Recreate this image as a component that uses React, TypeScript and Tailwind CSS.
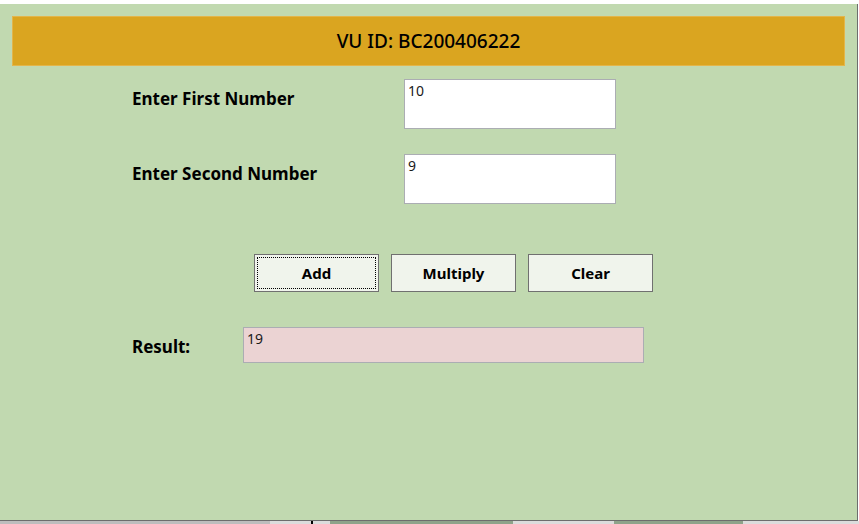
const font = { fontFamily: '"Noto Sans", "Open Sans", sans-serif' };

function Field({ label, value }: { label: string; value: string }) {
  return (
    <div className="flex items-start">
      <div className="w-[404px] pl-[132px] pt-[10px] text-[17px] leading-[20px] font-bold text-black whitespace-nowrap">
        {label}
      </div>
      <div className="w-[212px] h-[50px] bg-white border border-[#abadb3] px-[3px] pt-[2px] text-[14px] leading-[18px] text-[#1a1a1a]">
        {value}
      </div>
    </div>
  );
}

function Btn({ label, focused }: { label: string; focused?: boolean }) {
  return (
    <button className="w-[125px] h-[38px] bg-[#f0f4ec] border border-[#707070] p-[2px] text-[15px] font-bold text-black">
      <div
        className={
          "w-full h-full flex items-center justify-center " +
          (focused ? "border border-dotted border-black" : "border border-transparent")
        }
      >
        {label}
      </div>
    </button>
  );
}

export default function App() {
  return (
    <div className="w-[859px] h-[524px] bg-white overflow-hidden" style={font}>
      <div className="h-[4px]" />
      <div className="w-[858px] h-[517px] bg-[#c1d9b0] border-r border-b border-[#6d6d6d] flex flex-col">
        <div className="mt-[12px] ml-[12px] w-[833px] h-[50px] bg-[#daa520] border border-[#e3b54a] flex items-center justify-center text-[19px] font-medium text-black">
          VU ID: BC200406222
        </div>

        <div className="mt-[13px]">
          <Field label="Enter First Number" value="10" />
        </div>
        <div className="mt-[25px]">
          <Field label="Enter Second Number" value="9" />
        </div>

        <div className="mt-[50px] pl-[254px] flex gap-[12px]">
          <Btn label="Add" focused />
          <Btn label="Multiply" />
          <Btn label="Clear" />
        </div>

        <div className="mt-[35px] flex items-start">
          <div className="w-[243px] pl-[132px] pt-[10px] text-[17px] leading-[20px] font-bold text-black">
            Result:
          </div>
          <div className="w-[401px] h-[36px] bg-[#ebd3d3] border border-[#abadb3] px-[3px] pt-[2px] text-[14px] leading-[18px] text-[#1a1a1a]">
            19
          </div>
        </div>
      </div>
      <div className="h-[3px] flex">
        <div className="w-[270px] bg-[#bdbdbd]" />
        <div className="w-[60px] bg-[#dcdcdc] relative">
          <div className="absolute left-[41px] top-0 w-[2px] h-full bg-black" />
        </div>
        <div className="w-[183px] bg-[#8ea38a]" />
        <div className="w-[101px] bg-[#dcdcdc]" />
        <div className="w-[129px] bg-[#8ea38a]" />
        <div className="flex-1 bg-[#dcdcdc]" />
      </div>
    </div>
  );
}
